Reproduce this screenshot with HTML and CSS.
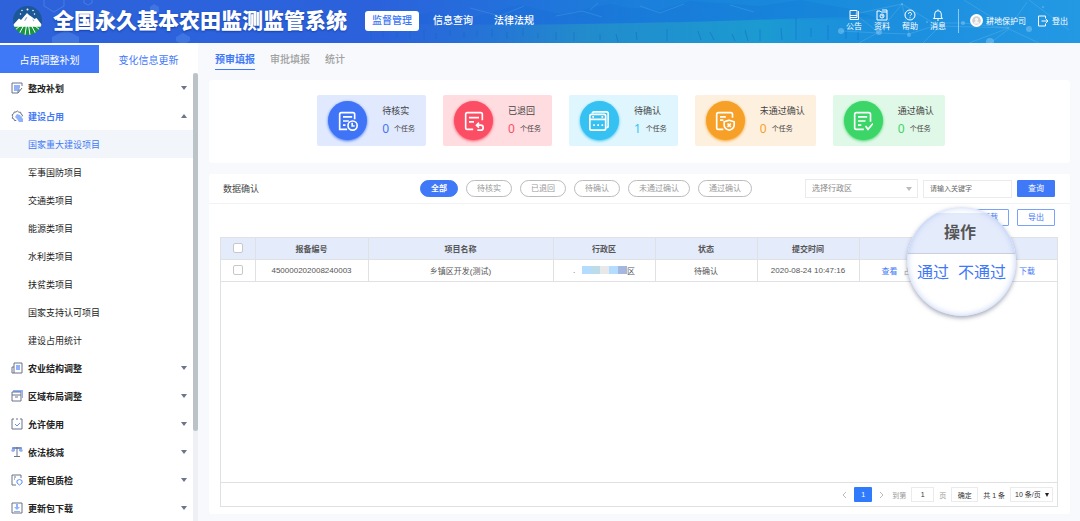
FILE: index.html
```html
<!DOCTYPE html>
<html lang="zh-CN">
<head>
  <meta charset="UTF-8">
  <meta name="viewport" content="width=device-width, initial-scale=1.0">
  <title>全国永久基本农田监测监管系统</title>
  <link rel="stylesheet" href="styles.css">
</head>
<body>

<!-- Header -->
<header class="header">
  <svg class="header-bg" viewBox="0 0 1080 43" preserveAspectRatio="none" aria-hidden="true">
    <defs>
      <linearGradient id="field" x1="0" x2="1">
        <stop offset="0" stop-color="#2b62d6" stop-opacity="0"/>
        <stop offset=".4" stop-color="#2492c6" stop-opacity=".7"/>
        <stop offset=".75" stop-color="#1c9fcf" stop-opacity=".8"/>
        <stop offset="1" stop-color="#2397e0" stop-opacity="0"/>
      </linearGradient>
    </defs>
    <g fill="#0f66cf" opacity=".15">
      <path d="M380 24 430 12 470 18 520 5 560 14 610 4 650 13 690 1 760 6 800 0 850 9 880 19 720 21 560 24z"/>
      <path d="M560 14 640 8 700 17 620 20zM700 10 780 5 840 14 760 17z"/>
    </g>
    <g stroke="#7cc8f5" opacity=".2" fill="none">
      <path d="M470 8l30 8 24-10M556 16l26-5 20 6M590 10l8-7M640 6l20 7 24-9M730 5l24 7"/>
    </g>
    <path d="M360 26Q600 25 720 21T900 16V43H360z" fill="url(#field)"/>
    <g stroke="#1261c4" opacity=".45">
      <path d="M371 31v8M383 28v10M397 32v6M410 31v8M424 30v9M436 33v6M450 30v6M464 32v6M477 30v7M492 29v8M507 32v7M523 28v8M538 33v5M556 32v8M574 32v9M600 34v6M616 34l2 8M636 32l1 8M667 29v12M698 31l3 9M710 32l4 8M732 34l3 7M745 30l3 11M760 29v12M781 28l1 12M796 18v22M811 28v9M828 25v15M846 29v10M858 32v8"/>
    </g>
    <g fill="#6ea3f2" opacity=".3">
      <path d="M52 43V37l14-7 13 7v6zM176 37l7-4 7 4v4l-4 2h-6l-4-2zM97 14l8-4 8 4v8l-8 4-8-4zM150 7l4-3 5 3v5l-5 3-4-3z"/>
    </g>
    <path d="M44 0v6l10 6 10-6V0M84 0v3l4 2 4-2V0" fill="none" stroke="#6ea3f2" opacity=".4"/>
    <g stroke="#9fd8fa" opacity=".2" fill="none">
      <path d="M841 31l38 2 30 1 34-11 20 0 46 5 18-26M879 33l-24-19 47-10 7 30M902 4l36 22 71 2-40 15M990 43l19-14 30 14M1009 28l-45-28M943 23l-20 20M902 4 879 32l-20 11M1029 0l40 30"/>
    </g>
    <g fill="#9fd8fa" opacity=".4">
      <circle cx="841" cy="31" r="3"/><circle cx="879" cy="32" r="3"/><circle cx="909" cy="35" r="2"/>
      <circle cx="963" cy="23" r="2"/><circle cx="990" cy="42" r="4"/><circle cx="1029" cy="29" r="3"/>
      <circle cx="902" cy="4" r="1"/><circle cx="927" cy="22" r="1"/><circle cx="1043" cy="7" r="1"/>
    </g>
  </svg>

  <div class="brand">
    <svg class="logo" viewBox="0 0 58 58" aria-hidden="true">
      <defs><clipPath id="disc"><circle cx="29" cy="29" r="29"/></clipPath></defs>
      <g clip-path="url(#disc)">
        <path d="M0 0h58v36H0z" fill="#1c5798"/>
        <path d="M0 36h58v22H0z" fill="#18983c"/>
        <path d="M0 38 12 25l4 3 12-14 4 4 6 4 5 4 4-2 11 14v3H0z" fill="#fff"/>
        <path d="M26 22l-4 8 3-1 4-6zM38 25l3 6 2-2z" fill="#8fb3d8"/>
        <g fill="#fff">
          <circle cx="29" cy="7" r="2"/><circle cx="18" cy="9" r="1.500"/><circle cx="40" cy="9" r="1.500"/>
          <circle cx="15" cy="16" r="1.500"/><circle cx="43" cy="16" r="1.500"/>
        </g>
        <path d="M27 38 24 58M31 38l3 20M22 38 12 56M36 38l10 18M16 38 2 50M42 38l14 12M0 40h58" stroke="#fff" stroke-width="2"/>
      </g>
    </svg>
    <h1 class="title">全国永久基本农田监测监管系统</h1>
  </div>

  <nav class="nav">
    <a href="#" class="active">监督管理</a>
    <a href="#">信息查询</a>
    <a href="#">法律法规</a>
  </nav>

  <div class="tools">
    <a href="#" class="tool">
      <svg viewBox="0 0 12 12"><path d="M2 1.500h7v7H2zM2 8.500v2h8.500V2M2 6.500h7"/></svg>
      公告
    </a>
    <a href="#" class="tool">
      <svg viewBox="0 0 12 12"><path d="M1 2h3l1 1h6v8H1zM6 1h5v2"/><circle cx="6" cy="7" r="2"/><path d="M6 6v1h1"/></svg>
      资料
    </a>
    <a href="#" class="tool">
      <svg viewBox="0 0 12 12"><circle cx="6" cy="6" r="5"/><path d="M4.500 5a1.500 1.500 0 1 1 2 1.300Q6 6.500 6 7.200M6 8.300v1"/></svg>
      帮助
    </a>
    <a href="#" class="tool">
      <svg viewBox="0 0 12 12"><path d="M6 .5v1M1.500 9.500h9L9.300 8V5a3.300 3.300 0 0 0-6.600 0v3zM5 11h2"/></svg>
      消息
    </a>
  </div>
  <div class="user">
    <svg class="avatar" viewBox="0 0 12 12"><circle cx="6" cy="6" r="6" fill="#fff"/><circle cx="6" cy="6" r="4" fill="#cfcfcf"/><circle cx="6" cy="5" r="1.500" fill="#f4f4f4"/><path d="M3.500 9a2.500 2.500 0 0 1 5 0z" fill="#f4f4f4"/></svg>
    <span>耕地保护司</span>
    <a href="#" class="logout">
      <svg viewBox="0 0 12 12"><path d="M8.500 3.500V1H1.500v10h7V8.500M4.500 6H11M9 4l2 2-2 2"/></svg>
      登出
    </a>
  </div>
</header>

<div class="layout">

  <!-- Sidebar -->
  <aside class="sidebar">
    <div class="side-tabs">
      <button type="button" class="active">占用调整补划</button>
      <button type="button">变化信息更新</button>
    </div>
    <div class="side-body">
      <nav class="menu">
        <a href="#" class="group">
          <svg viewBox="0 0 12 12"><path class="blue" d="M3 3h6v3L6 9H3z"/><path d="M11 4V1H1v10h6l4-5M7 11V8h2"/></svg>
          整改补划<i class="arrow"></i>
        </a>
        <a href="#" class="group open">
          <svg viewBox="0 0 12 12"><path class="blue" d="M4 7l2-3 3 1 3 4v3H8L6 9z"/><path d="M11 6.500 11.500 5l-1.500-1-.3-1.700-1.900-.1L6.500 1 5 2 3.200 2 2.700 3.700 1 4.800 1.700 6.500 1.200 8.200l1.700.7.600 1.700 1.800-.2"/></svg>
          建设占用<i class="arrow up"></i>
        </a>
        <a href="#" class="sub active">国家重大建设项目</a>
        <a href="#" class="sub">军事国防项目</a>
        <a href="#" class="sub">交通类项目</a>
        <a href="#" class="sub">能源类项目</a>
        <a href="#" class="sub">水利类项目</a>
        <a href="#" class="sub">扶贫类项目</a>
        <a href="#" class="sub">国家支持认可项目</a>
        <a href="#" class="sub">建设占用统计</a>
        <a href="#" class="group">
          <svg viewBox="0 0 12 12"><path class="blue" d="M5 3h4v5H5z"/><path d="M3 1h8v10H1V5h2zM3 5v6"/></svg>
          农业结构调整<i class="arrow"></i>
        </a>
        <a href="#" class="group">
          <svg viewBox="0 0 12 12"><path class="blue" d="M2 0h10v8h-1V2H2z"/><path d="M1 2h9v9H1zM1 5h9M4 7h3"/></svg>
          区域布局调整<i class="arrow"></i>
        </a>
        <a href="#" class="group">
          <svg viewBox="0 0 12 12"><path d="M3 1H1v10h10V1H9M5 1h2"/><path class="blue-line" d="M4 6l2 2 3-3"/></svg>
          允许使用<i class="arrow"></i>
        </a>
        <a href="#" class="group">
          <svg viewBox="0 0 12 12"><path class="blue" d="M0 5 2 1h8l2 4-2 1-2-1V3H4v2L2 6z"/><path d="M6 1v9M3 10.500h6M1 2h10"/></svg>
          依法核减<i class="arrow"></i>
        </a>
        <a href="#" class="group">
          <svg viewBox="0 0 12 12"><path d="M10 4V1H1v10h4M3 3h2M3 5h1"/><path class="blue-line" d="M6 6.500 8.500 5.500 11 6.500V9L8.500 11 6 9z"/></svg>
          更新包质检<i class="arrow"></i>
        </a>
        <a href="#" class="group">
          <svg viewBox="0 0 12 12"><path d="M1 1h10v10H1z"/><path class="blue" d="M5 2h2v3h2L6 8 3 5h2zM3 9h6v1H3z"/></svg>
          更新包下载<i class="arrow"></i>
        </a>
      </nav>
      <div class="scroll-track"><div class="scroll-thumb"></div></div>
    </div>
  </aside>

  <!-- Main content -->
  <main class="main">
    <nav class="page-tabs">
      <a href="#" class="active">预审填报</a>
      <a href="#">审批填报</a>
      <a href="#">统计</a>
    </nav>

    <section class="stats">
      <div class="stat blue-card">
        <span class="stat-icon"><svg viewBox="0 0 24 24"><path d="M20 10V4a2 2 0 0 0-2-2H4a2 2 0 0 0-2 2v18h9M6 7h11M6 12h7M6 17h3"/><circle cx="17.500" cy="17.500" r="5.500"/><path d="M17 14v4h3"/></svg></span>
        <div><p class="stat-name">待核实</p><p class="stat-num"><b>0</b>个任务</p></div>
      </div>
      <div class="stat red-card">
        <span class="stat-icon"><svg viewBox="0 0 24 24"><path d="M22 11V4a2 2 0 0 0-2-2H4a2 2 0 0 0-2 2v16a2 2 0 0 0 2 2h7M6 8h12M6 13h6M15 17h5a3 3 0 0 1 0 6h-4M18 14l-3 3 3 3"/></svg></span>
        <div><p class="stat-name">已退回</p><p class="stat-num"><b>0</b>个任务</p></div>
      </div>
      <div class="stat cyan-card">
        <span class="stat-icon"><svg viewBox="0 0 24 24"><path d="M4 3a2 2 0 0 1 2-2h15a2 2 0 0 1 2 2v15a2 2 0 0 1-2 2"/><rect x="1" y="4" width="19" height="19" rx="2"/><path d="M1 10h19M4 7h2M15 7h2M5 17h2M10 17h2M15 17h2"/></svg></span>
        <div><p class="stat-name">待确认</p><p class="stat-num"><b>1</b>个任务</p></div>
      </div>
      <div class="stat orange-card">
        <span class="stat-icon"><svg viewBox="0 0 24 24"><path d="M21 8V4a2 2 0 0 0-2-2H4a2 2 0 0 0-2 2v16a2 2 0 0 0 2 2h6M6 7h7M6 11h4M17 11l6 2v4q0 4-6 6-6-2-6-6v-4zM15 15l4 4M19 15l-4 4"/></svg></span>
        <div><p class="stat-name">未通过确认</p><p class="stat-num"><b>0</b>个任务</p></div>
      </div>
      <div class="stat green-card">
        <span class="stat-icon"><svg viewBox="0 0 24 24"><path d="M21 13V4a2 2 0 0 0-2-2H4a2 2 0 0 0-2 2v16a2 2 0 0 0 2 2h9M6 7h11M6 12h9M6 17h4M15 18l3 4 6-7"/></svg></span>
        <div><p class="stat-name">通过确认</p><p class="stat-num"><b>0</b>个任务</p></div>
      </div>
    </section>

    <section class="panel">
      <div class="panel-head">
        <h2>数据确认</h2>
        <div class="pills">
          <button type="button" class="active">全部</button>
          <button type="button">待核实</button>
          <button type="button">已退回</button>
          <button type="button">待确认</button>
          <button type="button">未通过确认</button>
          <button type="button">通过确认</button>
        </div>
        <form class="filters">
          <span class="select-box">
            <select aria-label="行政区"><option>选择行政区</option></select>
          </span>
          <input type="text" aria-label="关键字" placeholder="请输入关键字">
          <button type="button" class="btn primary">查询</button>
        </form>
      </div>

      <div class="actions">
        <button type="button" class="btn">下载</button>
        <button type="button" class="btn">导出</button>
      </div>

      <div class="grid">
        <table class="data">
          <colgroup>
            <col class="c-check"><col class="c-code"><col class="c-name"><col class="c-mid"><col class="c-mid"><col class="c-mid"><col class="c-ops">
          </colgroup>
          <thead>
            <tr>
              <th><input type="checkbox" aria-label="全选"></th>
              <th>报备编号</th>
              <th>项目名称</th>
              <th>行政区</th>
              <th>状态</th>
              <th>提交时间</th>
              <th></th>
            </tr>
          </thead>
          <tbody>
            <tr>
              <td><input type="checkbox" aria-label="选择"></td>
              <td>450000202008240003</td>
              <td>乡镇区开发(测试)</td>
              <td><div class="area">.<span class="mosaic"><i></i><i></i><i></i><i></i><i></i></span>区</div></td>
              <td>待确认</td>
              <td>2020-08-24 10:47:16</td>
              <td><div class="ops"><a href="#">查看</a><span>占</span><a href="#">下载</a></div></td>
            </tr>
          </tbody>
        </table>

        <div class="pager">
          <button type="button" class="step" aria-label="上一页"><svg viewBox="0 0 6 8"><path d="M5 1 2 4l3 3"/></svg></button>
          <button type="button" class="page">1</button>
          <button type="button" class="step" aria-label="下一页"><svg viewBox="0 0 6 8"><path d="M1 1l3 3-3 3"/></svg></button>
          <label for="pageNo">到第</label>
          <input type="text" id="pageNo" value="1">
          <span class="muted">页</span>
          <button type="button" class="go">确定</button>
          <span>共 1 条</span>
          <span class="select-box small">
            <select aria-label="每页条数"><option>10 条/页</option></select>
          </span>
        </div>

        <!-- Magnified operation column -->
        <div class="lens">
          <div class="lens-head">操作</div>
          <div class="lens-body"><a href="#">通过</a><a href="#">不通过</a></div>
        </div>
      </div>
    </section>
  </main>
</div>

</body>
</html>
```

FILE: styles.css
```css
* {
  box-sizing: border-box;
}

body {
  margin: 0;
  height: 100vh;
  display: flex;
  flex-direction: column;
  overflow: hidden;
  font-family: "Liberation Sans", "Noto Sans CJK SC", sans-serif;
  font-size: 8px;
  color: #555;
  background-color: #f7f9fc;
}

h1, h2, p {
  margin: 0;
}

a {
  color: inherit;
  text-decoration: none;
}

button, input, select {
  font: inherit;
  color: inherit;
  margin: 0;
  padding: 0;
  border: none;
  border-radius: 0;
  background: none;
}

button {
  cursor: pointer;
}

svg {
  display: block;
  fill: none;
}

/* Header */
.header {
  position: relative;
  flex: none;
  display: flex;
  align-items: center;
  height: 43px;
  padding: 0 12px 2px 13px;
  color: #fff;
  background: linear-gradient(90deg, #2d62da 0%, #2b62dc 35%, #1b7edb 58%, #188bdc 75%, #2398e3 100%);
}

.header-bg {
  position: absolute;
  top: 0;
  left: 0;
  width: 100%;
  height: 100%;
}

.brand, .nav, .tools, .user {
  position: relative;
  display: flex;
  align-items: center;
}

.brand {
  gap: 11px;
}

.logo {
  width: 29px;
  height: 29px;
}

.title {
  font-size: 21px;
  font-weight: 900;
  line-height: 30px;
  white-space: nowrap;
  text-shadow: 0 1px 2px rgba(0, 30, 120, 0.5);
}

.nav {
  gap: 7px;
  margin-left: 18px;
  font-size: 10px;
  font-weight: 500;
}

.nav a {
  padding: 0 7px;
  line-height: 20px;
}

.nav .active {
  color: #3b76f6;
  background-color: #fff;
  border-radius: 3px;
}

.tools {
  gap: 12px;
  margin-left: auto;
  padding-right: 12px;
  border-right: 1px solid #8cc8f4;
}

.tool {
  display: flex;
  flex-direction: column;
  align-items: center;
  line-height: 12px;
}

.tools svg, .logout svg {
  width: 12px;
  height: 12px;
  stroke: #fff;
}

.user {
  padding-left: 11px;
}

.avatar {
  width: 13px;
  height: 13px;
  margin-right: 3px;
}

.logout {
  display: flex;
  align-items: center;
  gap: 3px;
  margin-left: 11px;
}

/* Sidebar */
.layout {
  flex: 1;
  display: flex;
  min-height: 0;
}

.sidebar {
  width: 198px;
  flex: none;
  display: flex;
  flex-direction: column;
  padding-top: 2px;
  background-color: #fff;
}

.side-tabs {
  display: flex;
  flex: none;
}

.side-tabs button {
  flex: 1;
  height: 28px;
  font-size: 10px;
  color: #3f79f7;
}

.side-tabs .active {
  color: #fff;
  background-color: #3f79f7;
}

.side-body {
  flex: 1;
  display: flex;
  min-height: 0;
}

.menu {
  flex: 1;
  padding-top: 1px;
  overflow: hidden;
  font-size: 9px;
  color: #222;
}

.menu a {
  display: flex;
  align-items: center;
  height: 28px;
  padding: 0 6px 0 28px;
}

.menu .group {
  padding-left: 11px;
  gap: 5px;
  font-weight: 700;
}

.menu .open {
  color: #3f79f7;
}

.menu .active {
  color: #3f79f7;
  background-color: #f2f5f9;
}

.menu svg {
  width: 12px;
  height: 12px;
  stroke: #69738a;
}

.menu .blue {
  fill: #8fb2fb;
  stroke: none;
}

.menu .blue-line {
  stroke: #5b8ef8;
}

.arrow {
  margin-left: auto;
  border: 3px solid transparent;
  border-top: 4px solid #6b7488;
  border-bottom: none;
}

.arrow.up {
  border-top: none;
  border-bottom: 4px solid #6b7488;
}

.scroll-track {
  width: 5px;
  background-color: #eef0f5;
}

.scroll-thumb {
  height: 80%;
  background-color: #bcc3c8;
  border-radius: 3px;
}

/* Main */
.main {
  flex: 1;
  min-width: 0;
  display: flex;
  flex-direction: column;
  padding: 8px 10px 7px 11px;
}

.page-tabs {
  display: flex;
  gap: 15px;
  padding-left: 6px;
  font-size: 10px;
  font-weight: 500;
  line-height: 18px;
  color: #a0a0a0;
}

.page-tabs a {
  border-bottom: 1px solid transparent;
}

.page-tabs .active {
  font-weight: 700;
  color: #3f79f7;
  border-color: #3f79f7;
}

.stats {
  display: flex;
  justify-content: center;
  gap: 17px;
  margin-top: 10px;
  padding: 15px 17px 17px 0;
  background-color: #fff;
  border-radius: 3px;
}

.stat {
  display: flex;
  align-items: center;
  gap: 15px;
  height: 51px;
  padding: 0 11px;
  border-radius: 2px;
}

.stat-icon {
  display: flex;
  align-items: center;
  justify-content: center;
  width: 39px;
  height: 39px;
  border-radius: 50%;
  background-color: currentColor;
  box-shadow: 0 1px 3px currentColor;
}

.stat-icon svg {
  width: 20px;
  height: 20px;
  stroke: #fff;
  stroke-width: 2;
}

.stat-name {
  font-size: 9px;
  line-height: 16px;
  color: #444;
}

.stat-num {
  display: flex;
  align-items: center;
  gap: 5px;
  font-size: 7px;
  line-height: 20px;
  color: #444;
}

.stat-num b {
  font-family: "Noto Sans", sans-serif;
  font-size: 12px;
  font-weight: 400;
}

.blue-card { background-color: #e0e9fe; }
.blue-card .stat-icon, .blue-card b { color: #3f74f6; }
.red-card { background-color: #ffdce0; }
.red-card .stat-icon, .red-card b { color: #fb4e65; }
.cyan-card { background-color: #e0f6fe; }
.cyan-card .stat-icon, .cyan-card b { color: #35c1f1; }
.orange-card { background-color: #fef0df; }
.orange-card .stat-icon, .orange-card b { color: #f7a027; }
.green-card { background-color: #e0f8e7; }
.green-card .stat-icon, .green-card b { color: #3bd568; }

/* Data panel */
.panel {
  flex: 1;
  display: flex;
  flex-direction: column;
  margin-top: 11px;
  background-color: #fff;
  border-radius: 3px;
}

.panel-head {
  display: flex;
  align-items: center;
  justify-content: space-between;
  height: 30px;
  padding: 0 15px 0 14px;
  border-bottom: 1px solid #f2f2f4;
}

.panel-head h2 {
  font-size: 9px;
  font-weight: 400;
  color: #444;
}

.pills {
  display: flex;
  gap: 8px;
  margin-left: 108px;
}

.pills button {
  height: 17px;
  padding: 0 10px;
  font-size: 8px;
  line-height: 15px;
  color: #999;
  border: 1px solid #bbb;
  border-radius: 9px;
}

.pills .active {
  font-weight: 700;
  color: #fff;
  border-color: #3f79f7;
  background-color: #3f79f7;
}

.filters {
  display: flex;
  align-items: center;
  gap: 5px;
}

.select-box {
  position: relative;
}

.select-box select {
  display: block;
  width: 113px;
  height: 19px;
  padding: 0 6px;
  color: #8a8a8a;
  border: 1px solid #ebebeb;
  appearance: none;
}

.select-box::after {
  content: "";
  position: absolute;
  top: 8px;
  right: 6px;
  border: 3px solid transparent;
  border-top: 4px solid #bbb;
  border-bottom: none;
  pointer-events: none;
}

.filters input {
  width: 89px;
  height: 18px;
  padding: 0 6px;
  font-size: 7px;
  border: 1px solid #ebebeb;
}

.filters input::placeholder {
  color: #666;
}

.btn {
  width: 38px;
  height: 17px;
  font-size: 8px;
  line-height: 15px;
  color: #3f79f7;
  background-color: #fff;
  border: 1px solid #7ba2fa;
  border-radius: 1px;
}

.btn.primary {
  color: #fff;
  background-color: #3f79f7;
  border-color: #3f79f7;
}

.actions {
  display: flex;
  justify-content: flex-end;
  gap: 8px;
  padding: 5px 15px 11px;
}

.grid {
  position: relative;
  flex: 1;
  display: flex;
  flex-direction: column;
  margin: 0 12px 7px 11px;
  border: 1px solid #dfe1e4;
}

.data {
  width: 100%;
  table-layout: fixed;
  border-collapse: collapse;
  text-align: center;
}

.c-check { width: 34px; }
.c-code { width: 113px; }
.c-mid { width: 102px; }
.c-ops { width: 198px; }

.data th, .data td {
  height: 22px;
  padding: 0;
  border: 1px solid #dfe1e4;
}

.data tr > :first-child {
  border-left: none;
}

.data tr > :last-child {
  border-right: none;
}

.data th {
  height: 21px;
  color: #555;
  background-color: #e4ebfb;
  border-top: none;
}

.data input {
  display: block;
  width: 10px;
  height: 10px;
  margin: 0 auto;
  appearance: none;
  background-color: #fff;
  border: 1px solid #c8c8c8;
  border-radius: 2px;
}

.area {
  display: flex;
  align-items: center;
  justify-content: center;
}

.mosaic {
  display: flex;
  margin-left: 7px;
}

.mosaic i {
  width: 9px;
  height: 8px;
  background-color: #b3dcff;
}

.mosaic i:nth-child(2) { background-color: #bcdcea; }
.mosaic i:nth-child(3) { background-color: #e8e8e8; }
.mosaic i:nth-child(5) { background-color: #a3b7e0; }

.ops {
  display: flex;
  gap: 6px;
  padding: 0 22px;
}

.ops span {
  color: #999;
}

.ops a {
  color: #3f79f7;
}

.ops a:last-child {
  margin-left: auto;
}

/* Pager */
.pager {
  display: flex;
  align-items: center;
  justify-content: flex-end;
  gap: 5px;
  height: 24px;
  margin-top: auto;
  padding-right: 4px;
  font-size: 7px;
  color: #333;
  border-top: 1px solid #dfe1e4;
}

.pager button, .pager input {
  height: 15px;
}

.step {
  width: 10px;
}

.step svg {
  width: 6px;
  height: 8px;
  margin: 0 auto;
  stroke: #bbb;
}

.page {
  width: 18px;
  color: #fff;
  background-color: #2f7bfb;
  border-radius: 1px;
}

.pager label, .pager .muted {
  color: #999;
}

.pager input {
  width: 23px;
  text-align: center;
  border: 1px solid #ebebeb;
}

.pager .go {
  width: 27px;
  border: 1px solid #ebebeb;
}

.select-box.small select {
  width: 43px;
  height: 15px;
  padding: 0 4px;
  color: #333;
}

.select-box.small::after {
  top: 6px;
  right: 4px;
  border-width: 2px;
  border-top: 4px solid #222;
  border-bottom: none;
}

/* Lens */
.lens {
  position: absolute;
  top: -31px;
  right: 41px;
  width: 109px;
  height: 109px;
  padding-top: 6px;
  overflow: hidden;
  background-color: #fff;
  border-radius: 50%;
  box-shadow: 0 2px 4px rgba(80, 90, 120, 0.5);
}

.lens::after {
  content: "";
  position: absolute;
  inset: 0;
  border-radius: 50%;
  box-shadow: inset 0 0 6px rgba(140, 170, 240, 0.6);
  pointer-events: none;
}

.lens-head {
  height: 41px;
  padding-right: 3px;
  font-size: 16px;
  font-weight: 700;
  line-height: 39px;
  text-align: center;
  color: #555;
  background-color: #e4ebfb;
  border-bottom: 1px solid #c9cfdd;
}

.lens-body {
  display: flex;
  justify-content: center;
  gap: 9px;
  font-size: 16px;
  line-height: 38px;
  white-space: nowrap;
  color: #3f79f7;
}
```
